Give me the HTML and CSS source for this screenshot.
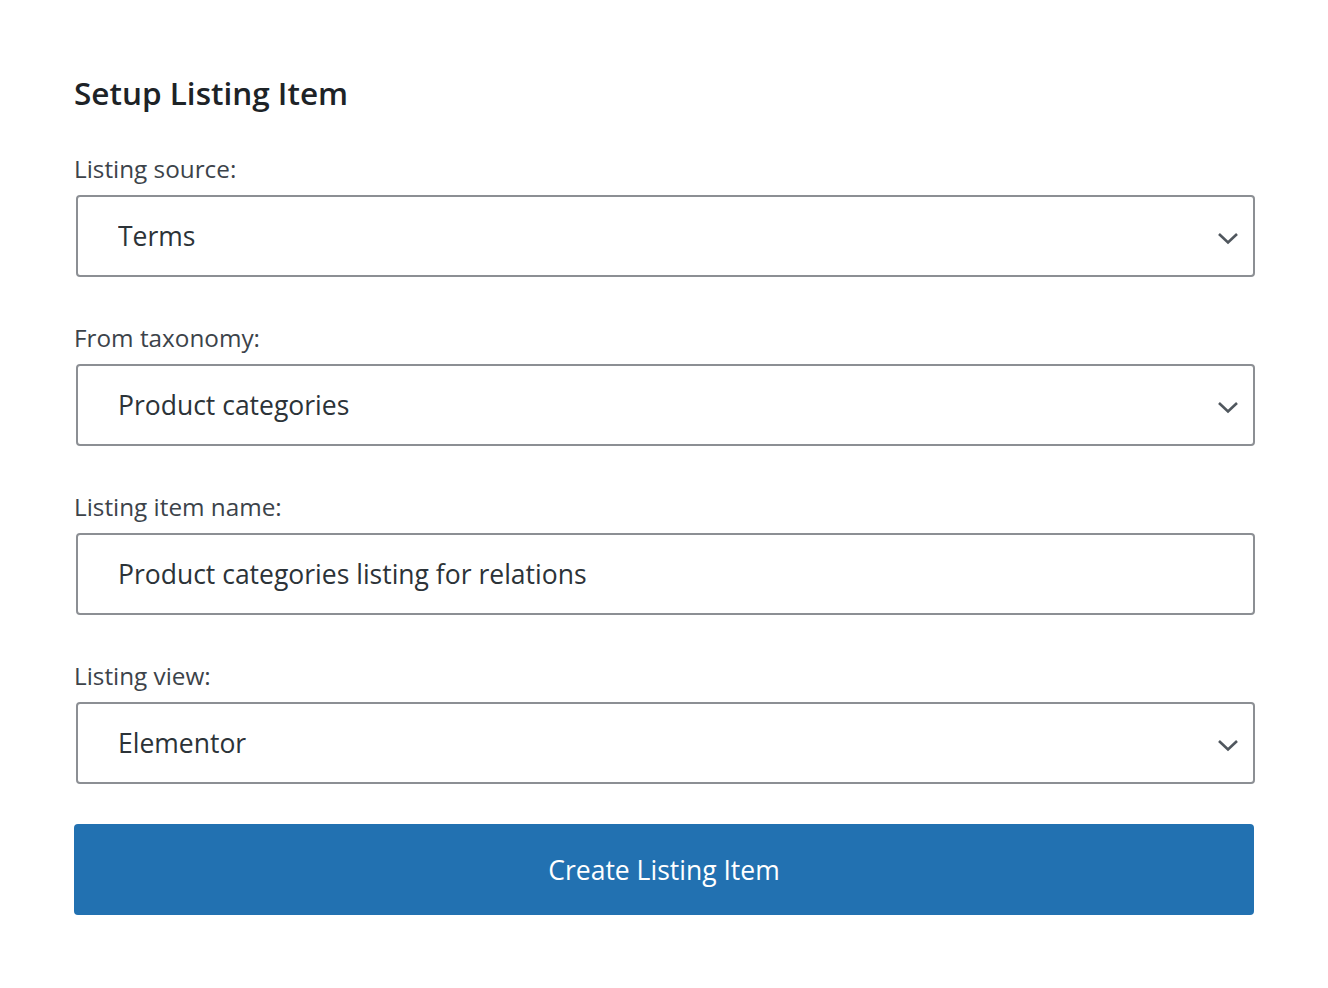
FILE: index.html
```html
<!DOCTYPE html>
<html lang="en">
<head>
<meta charset="utf-8">
<title>Setup Listing Item</title>
<link rel="stylesheet" href="styles.css">
</head>
<body>
<div class="panel">
  <h2 class="panel-title">Setup Listing Item</h2>
  <div class="field">
    <label class="field-label" for="src">Listing source:</label>
    <div class="select-wrap">
      <select id="src" class="control"><option>Terms</option></select>
      <svg class="chevron" width="22" height="14" viewBox="0 0 22 14"><polyline points="2,3 11,11.5 20,3" fill="none" stroke="#50575e" stroke-width="2.6"/></svg>
    </div>
  </div>
  <div class="field">
    <label class="field-label" for="tax">From taxonomy:</label>
    <div class="select-wrap">
      <select id="tax" class="control"><option>Product categories</option></select>
      <svg class="chevron" width="22" height="14" viewBox="0 0 22 14"><polyline points="2,3 11,11.5 20,3" fill="none" stroke="#50575e" stroke-width="2.6"/></svg>
    </div>
  </div>
  <div class="field">
    <label class="field-label" for="name">Listing item name:</label>
    <input id="name" class="control" type="text" value="Product categories listing for relations">
  </div>
  <div class="field">
    <label class="field-label" for="view">Listing view:</label>
    <div class="select-wrap">
      <select id="view" class="control"><option>Elementor</option></select>
      <svg class="chevron" width="22" height="14" viewBox="0 0 22 14"><polyline points="2,3 11,11.5 20,3" fill="none" stroke="#50575e" stroke-width="2.6"/></svg>
    </div>
  </div>
  <button class="create-btn" type="button">Create Listing Item</button>
</div>
</body>
</html>
```
FILE: styles.css
```css
html, body {
  margin: 0;
  padding: 0;
  background: #ffffff;
}
body {
  font-family: "Open Sans", "Noto Sans", "Liberation Sans", sans-serif;
  color: #2c3338;
}
.panel {
  width: 1180px;
  padding: 73px 0 0 74px;
  display: flex;
  flex-direction: column;
}
.panel-title {
  margin: 0 0 40px;
  font-size: 31.5px;
  line-height: 40px;
  font-weight: 600;
  color: #1d2327;
}
.field {
  display: flex;
  flex-direction: column;
}
.field + .field {
  margin-top: 45px;
}
.field-label {
  font-size: 24.3px;
  line-height: 32px;
  margin-bottom: 10px;
  color: #3c434a;
}
.select-wrap {
  position: relative;
}
.control {
  box-sizing: border-box;
  width: 1179px;
  height: 82px;
  margin: 0 0 0 2px;
  padding: 0 60px 0 40px;
  border: 2px solid #8c8f94;
  border-radius: 4px;
  background: #fff;
  font-family: inherit;
  font-size: 26.5px;
  color: #2c3338;
  appearance: none;
  -webkit-appearance: none;
  outline: none;
}
.chevron {
  position: absolute;
  right: 15px;
  top: 36px;
  pointer-events: none;
}
.create-btn {
  margin-top: 40px;
  width: 1180px;
  height: 91px;
  border: 0;
  border-radius: 4px;
  background: #2271b1;
  color: #fff;
  font-family: inherit;
  font-size: 26.5px;
  cursor: pointer;
}
```
